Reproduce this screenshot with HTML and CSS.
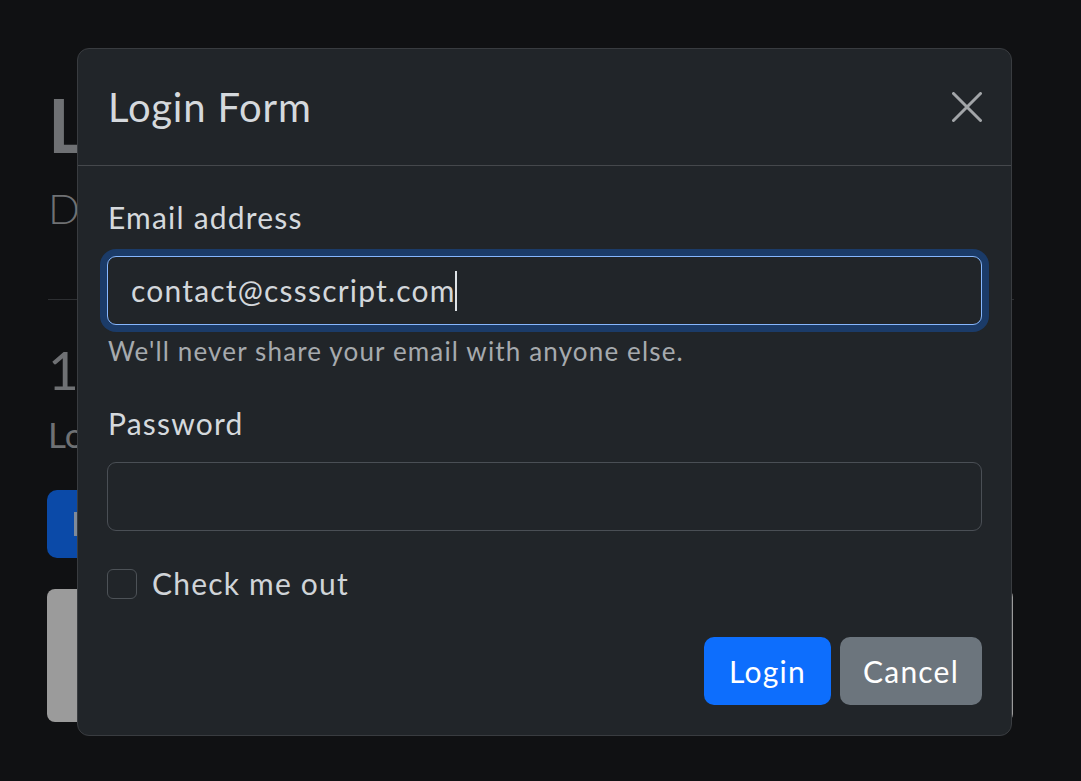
FILE: index.html
```html
<!DOCTYPE html>
<html lang="en">
<head>
<meta charset="utf-8">
<title>Login Form</title>
<link rel="stylesheet" href="styles.css">
</head>
<body>
<main class="page">
  <h1 class="page-title">L</h1>
  <p class="lead">D</p>
  <hr class="rule">
  <h2 class="section-title">1</h2>
  <p class="section-text">Lo</p>
  <button class="launch"></button>
  <div class="code-box"></div>
</main>

<div class="modal">
  <div class="modal-header">
    <h5 class="modal-title">Login Form</h5>
    <span class="close" aria-label="Close">
      <svg width="30" height="30" viewBox="0 0 30 30"><path d="M1.5 1.5 L28.5 28.5 M28.5 1.5 L1.5 28.5" stroke="#a2a5a8" stroke-width="3" stroke-linecap="round" fill="none"/></svg>
    </span>
  </div>
  <div class="modal-body">
    <div class="field">
      <label class="label">Email address</label>
      <div class="control focused"><span class="value">contact@cssscript.com</span><span class="caret"></span></div>
      <div class="help">We'll never share your email with anyone else.</div>
    </div>
    <div class="field">
      <label class="label">Password</label>
      <div class="control"></div>
    </div>
    <div class="check-row">
      <span class="checkbox"></span>
      <span class="check-label">Check me out</span>
    </div>
    <div class="actions">
      <button class="btn btn-primary">Login</button>
      <button class="btn btn-secondary">Cancel</button>
    </div>
  </div>
</div>
</body>
</html>
```
FILE: styles.css
```css
html, body {
  margin: 0;
  padding: 0;
}
body {
  background: #101113;
  font-family: Lato, "Noto Sans", sans-serif;
  width: 1081px;
  height: 781px;
  overflow: hidden;
  position: relative;
}
.page {
  padding: 80px 0 0 48px;
  width: 966px;
  color: #6f7174;
}
.page-title {
  margin: 0;
  font-size: 74px;
  line-height: 89px;
  font-weight: 700;
}
.lead {
  margin: 8px 0 0;
  font-size: 42px;
  line-height: 63px;
  font-weight: 300;
}
.rule {
  margin: 59px 0 0;
  border: 0;
  border-top: 1px solid #2d2f32;
  height: 0;
}
.section-title {
  margin: 38px 0 0;
  font-size: 53px;
  line-height: 64px;
  font-weight: 400;
}
.section-text {
  margin: 6px 0 0;
  font-size: 35px;
  line-height: 52px;
}
.launch {
  display: flex;
  align-items: center;
  margin: 30px 0 0 -1px;
  height: 68px;
  width: 300px;
  border: 0;
  border-radius: 10px;
  background: #0b4aa8;
  padding: 0 0 0 27px;
}
.launch::before {
  content: "";
  display: block;
  width: 3px;
  height: 24px;
  background: #7f8a99;
}
.code-box {
  margin: 31px 0 0 -1px;
  height: 133px;
  width: 966px;
  border-radius: 8px;
  background: #9b9b9b;
}

/* modal */
.modal {
  position: absolute;
  left: 77px;
  top: 48px;
  width: 933px;
  height: 686px;
  background: #212529;
  border: 1px solid #393c40;
  border-radius: 12px;
  color: #dee2e6;
  display: flex;
  flex-direction: column;
}
.modal-header {
  display: flex;
  align-items: center;
  justify-content: space-between;
  padding: 28px 29px 28px 30px;
  border-bottom: 1px solid #45484c;
}
.modal-title {
  margin: 0;
  font-size: 40px;
  line-height: 60px;
  font-weight: 400;
  color: #d5d9dd;
  letter-spacing: 0.8px;
}
.close {
  display: block;
  width: 30px;
  height: 30px;
}
.close svg {
  display: block;
}
.modal-body {
  padding: 29px 29px 30px 29px;
  display: flex;
  flex-direction: column;
  letter-spacing: 1.2px;
}
.field {
  display: flex;
  flex-direction: column;
  margin-bottom: 30px;
}
.label {
  font-size: 30px;
  line-height: 45px;
  margin: 0 0 16px 1px;
  color: #d5d9dd;
}
.control {
  height: 67px;
  border: 1px solid #4a4f55;
  border-radius: 9px;
  background: #212529;
  box-sizing: content-box;
  display: flex;
  align-items: center;
  padding: 0 23px;
  font-size: 30px;
  line-height: 45px;
  color: #d3d7db;
}
.control.focused {
  border-color: #86b7fe;
  box-shadow: 0 0 0 7px #1b3b68;
}
.caret {
  display: inline-block;
  width: 2px;
  height: 40px;
  background: #dee2e6;
  margin-left: -1px;
}
.help {
  margin-top: 7px;
  font-size: 26px;
  line-height: 39px;
  color: #a6aaae;
  margin-left: 1px;
  letter-spacing: 1.15px;
}
.check-row {
  display: flex;
  align-items: center;
  height: 45px;
  margin-bottom: 31px;
}
.checkbox {
  width: 28px;
  height: 28px;
  border: 1px solid #4d5257;
  border-radius: 6px;
  background: #212529;
  margin-right: 15px;
}
.check-label {
  font-size: 30px;
  line-height: 45px;
  color: #d0d4d8;
}
.actions {
  display: flex;
  justify-content: flex-end;
  gap: 9px;
}
.btn {
  height: 68px;
  border: 0;
  border-radius: 10px;
  font-family: inherit;
  font-size: 30px;
  line-height: 45px;
  letter-spacing: 1.2px;
  color: #ffffff;
  padding: 0;
  text-align: center;
}
.btn-primary {
  background: #0d6efd;
  width: 127px;
}
.btn-secondary {
  background: #6c757d;
  width: 142px;
}
```
